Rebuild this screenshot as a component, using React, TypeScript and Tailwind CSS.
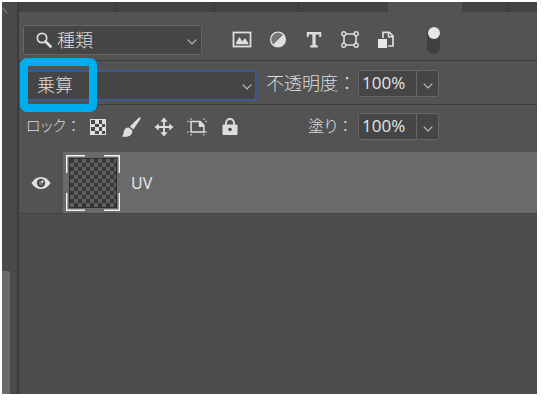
import React, { useState } from "react";

const Chevron = ({ className = "" }: { className?: string }) => (
  <svg viewBox="0 0 10 6" className={`h-[6px] w-[10px] ${className}`} fill="none" stroke="#bdbdbd" strokeWidth="1.2" aria-hidden="true">
    <path d="M0.7 0.7 5 5 9.3 0.7" />
  </svg>
);

const ImageIcon = () => (
  <svg viewBox="0 0 20 20" className="size-5" aria-hidden="true">
    <rect x="1.5" y="2.5" width="17" height="14" fill="none" stroke="#dedede" strokeWidth="1.8" />
    <path d="M4 14.2V12.8L7.4 7l3 4.6L12.8 8l3.4 4.8v1.4Z" fill="#dedede" />
  </svg>
);

const AdjustIcon = () => (
  <svg viewBox="0 0 20 20" className="size-5" aria-hidden="true">
    <path d="M15.3 4.2A7.5 7.5 0 0 1 4.7 14.8Z" fill="#dedede" />
    <path d="M15.3 4.2A7.5 7.5 0 0 0 4.7 14.8Z" fill="#777777" />
    <circle cx="10" cy="9.5" r="7.4" fill="none" stroke="#dedede" strokeWidth="1.3" />
  </svg>
);

const TypeIcon = () => (
  <svg viewBox="0 0 20 20" className="size-5" fill="#dedede" aria-hidden="true">
    <path d="M2.8 2h14.4v5h-2V4.6h-3.6v10.6h2.2v2.2H6.2v-2.2h2.2V4.6H4.8V7h-2Z" />
  </svg>
);

const ShapeIcon = () => (
  <svg viewBox="0 0 20 20" className="size-5" fill="none" stroke="#dedede" aria-hidden="true">
    <path d="M4 5.5v8M16 5.5v8M5.5 4h9M5.5 15h9" strokeWidth="1.6" />
    <g strokeWidth="1.4" fill="#535353">
      <circle cx="3.8" cy="3.8" r="2" />
      <circle cx="16.2" cy="3.8" r="2" />
      <circle cx="3.8" cy="15.2" r="2" />
      <circle cx="16.2" cy="15.2" r="2" />
    </g>
  </svg>
);

const SmartIcon = () => (
  <svg viewBox="0 0 20 20" className="size-5" aria-hidden="true">
    <path d="M7 8V2.3h6.5L17 6v10h-5" fill="none" stroke="#dedede" strokeWidth="1.7" />
    <path d="M12.5 2v4.8H17" fill="none" stroke="#dedede" strokeWidth="1.5" />
    <rect x="2" y="9" width="9" height="9" fill="#e6e6e6" />
  </svg>
);

const CheckerIcon = () => (
  <svg viewBox="0 0 20 20" className="size-5" aria-hidden="true">
    <rect x="2" y="2" width="16" height="16" fill="#dedede" />
    <path d="M3 3h4v4H3zM11 3h3v4h-3zM7 7h4v3H7zM14 7h3v3h-3zM3 10h4v4H3zM11 10h3v4h-3zM7 14h4v3H7zM14 14h3v3h-3z" fill="#484848" />
  </svg>
);

const BrushIcon = () => (
  <svg viewBox="0 0 20 20" className="size-5" fill="#dedede" aria-hidden="true">
    <path d="M19.2 .5c.6.4.5 1 .1 1.7l-7 10.3-3.5-3L17.500 1c.6-.6 1.200-.9 1.700-.5Z" />
    <path d="M8 10.700l3.300 2.900c.4 4.800-4.600 7.200-10.600 5.800 2.200-1.300 1.400-3.400 2.400-5.800.9-2.200 2.800-3.300 4.900-2.900Z" />
  </svg>
);

const MoveIcon = () => (
  <svg viewBox="0 0 20 20" className="size-5" fill="#dedede" aria-hidden="true">
    <path d="M9.100 4h1.800v5.100H16v1.800h-5.100V16H9.100v-5.100H4V9.100h5.100Z" />
    <path d="M10 .5 13.600 4.800H6.400ZM10 19.500l3.600-4.300H6.400ZM.5 10l4.300-3.600v7.200ZM19.500 10l-4.300-3.600v7.200Z" />
  </svg>
);

const ArtboardIcon = () => (
  <svg viewBox="0 0 22 20" className="h-5 w-5 overflow-visible" aria-hidden="true">
    <path d="M4.500 3v13M3 4h11.500l4 4v8M3.500 15.500H20" fill="none" stroke="#dedede" strokeWidth="1.600" />
    <path d="M13 4h1.800L18.800 8v2H13Z" fill="#dedede" />
    <path d="M3.700 .5h1.600v1.600H3.700zM17.700 .5h1.600v1.600h-1.600zM.2 3.200h1.600v1.600H.2zM20.200 3.200h1.600v1.600h-1.600zM.2 14.700h1.600v1.600H.2zM20.200 14.700h1.600v1.600h-1.600zM3.700 17.700h1.600v1.600H3.700zM17.700 17.700h1.600v1.600h-1.600z" fill="#c4c4c4" />
  </svg>
);

const LockIcon = () => (
  <svg viewBox="0 0 20 20" className="size-5" aria-hidden="true">
    <path d="M6 9V6a4 4 0 0 1 8 0v3" fill="none" stroke="#dedede" strokeWidth="1.900" />
    <rect x="2.500" y="7.500" width="15" height="10.500" rx="1" fill="#dedede" />
    <circle cx="10" cy="12.500" r="1.800" fill="#4a4a4a" />
  </svg>
);

const EyeIcon = () => (
  <svg viewBox="0 0 20 14" className="h-[14px] w-5" aria-hidden="true">
    <path d="M.5 7C3 3 6.200 1 10 1s7 2 9.500 6C17 11 13.800 13 10 13S3 11 .5 7Z" fill="#e2e2e2" />
    <circle cx="10" cy="7" r="4.200" fill="#484848" />
    <circle cx="10" cy="7" r="2.300" fill="#777777" />
    <circle cx="11.400" cy="5.600" r="1.200" fill="#e2e2e2" />
  </svg>
);

const Thumbnail = () => (
  <svg viewBox="0 0 54 56" className="h-14 w-[54px]" aria-hidden="true">
    <defs>
      <pattern id="checker" width="8" height="8" x="4" y="4" patternUnits="userSpaceOnUse">
        <rect width="8" height="8" fill="#606060" />
        <path d="M0 0h4v4H0zM4 4h4v4H4z" fill="#363636" />
      </pattern>
    </defs>
    <rect x="3.500" y="3.500" width="47" height="49" fill="url(#checker)" stroke="#2d2d2d" />
    <path d="M.7 18V.7H19M38 .7h15.300V18M53.300 38v17.300H38M19 55.300H.7V38" fill="none" stroke="#f2f2f2" strokeWidth="1.400" />
  </svg>
);

const IconButton = ({ label, children }: { label: string; children: React.ReactNode }) => (
  <button type="button" aria-label={label} className="flex h-5 shrink-0 items-center justify-center">
    {children}
  </button>
);

const PercentField = ({ id, menuLabel }: { id: string; menuLabel: string }) => (
  <div className="flex h-[27px] w-[81px] shrink-0 rounded-[3px] border border-[#666666] bg-[#454545]">
    <input
      id={id}
      defaultValue="100%"
      className="w-[57px] min-w-0 bg-transparent pb-[2px] pl-[3px] font-['Open_Sans',sans-serif] text-[17px] leading-6 font-normal text-[#e4e4e4] outline-none"
    />
    <button type="button" aria-label={menuLabel} className="flex flex-1 items-center justify-center border-l border-[#666666] pt-1">
      <Chevron />
    </button>
  </div>
);

export default function App() {
  const [filterOn, setFilterOn] = useState(true);

  return (
    <div className="h-screen bg-white pt-[2px] pr-[7px] pb-[6px] pl-[2px] font-['Noto_Sans_CJK_JP',sans-serif] text-[18px] leading-6 font-light text-[#dcdcdc]">
      <div className="flex h-full overflow-hidden bg-[#4d4d4d]">
        <aside className="flex w-[17px] shrink-0 flex-col border-r-2 border-[#3b3b3b] bg-[#4a4a4a]">
          <svg viewBox="0 0 6 10" className="mt-[3px] h-[10px] w-[6px]" fill="none" stroke="#999999" aria-hidden="true">
            <path d="M0 2.500 5 8" />
          </svg>
          <div className="mt-auto h-[123px] w-2 rounded-tr-[2px] bg-[#6a6a6a]" />
        </aside>

        <main className="flex min-w-0 flex-1 flex-col">
          <div className="flex h-[10px] shrink-0 bg-[#434343]">
            <div className="w-[97px] border-r border-[#373737]" />
            <div className="w-[99px] border-r border-[#373737]" />
            <div className="w-[84px] border-r border-[#373737]" />
            <div className="w-[89px]" />
            <div className="w-[74px] bg-[#535353]" />
            <div className="w-[47px] border-r border-[#373737]" />
          </div>

          <div className="flex h-[49px] shrink-0 items-center border-b border-[#3d3d3d] bg-[#535353] pt-2 pl-1">
            <div className="relative w-[179px] shrink-0">
              <svg viewBox="0 0 16 16" className="pointer-events-none absolute top-[7px] left-[13px] size-4" fill="none" stroke="#dedede" aria-hidden="true">
                <circle cx="6" cy="6" r="4.700" strokeWidth="1.700" />
                <path d="m9.500 9.500 5 5" strokeWidth="2.600" strokeLinecap="round" />
              </svg>
              <select aria-label="フィルター" className="block h-[30px] w-full appearance-none rounded-[3px] border border-[#666666] bg-[#454545] pb-[2px] pl-[33px] outline-none">
                <option>種類</option>
              </select>
              <Chevron className="pointer-events-none absolute top-[14px] right-[5px]" />
            </div>
            <div className="ml-[30px] flex gap-4">
              <IconButton label="ピクセルレイヤー"><ImageIcon /></IconButton>
              <IconButton label="調整レイヤー"><AdjustIcon /></IconButton>
              <IconButton label="テキストレイヤー"><TypeIcon /></IconButton>
              <IconButton label="シェイプレイヤー"><ShapeIcon /></IconButton>
              <IconButton label="スマートオブジェクト"><SmartIcon /></IconButton>
            </div>
            <button
              type="button"
              role="switch"
              aria-checked={filterOn}
              aria-label="フィルターの切り替え"
              onClick={() => setFilterOn(!filterOn)}
              className={`ml-[31px] flex h-[27px] w-[13px] shrink-0 justify-center rounded-full bg-[#404040] ${filterOn ? "items-start" : "items-end"}`}
            >
              <span className="size-3 shrink-0 rounded-full bg-[#e6e6e6]" />
            </button>
          </div>

          <div className="flex h-11 shrink-0 items-start border-b border-[#3d3d3d] bg-[#535353] pt-[9px] pl-[6px]">
            <div className="relative w-[232px] shrink-0">
              <select aria-label="描画モード" className="block h-[31px] w-full appearance-none rounded-[2px] border-2 border-[#3c5a8c] bg-[#454545] pb-1 pl-[10px] outline-none">
                <option>乗算</option>
              </select>
              <Chevron className="pointer-events-none absolute top-[14px] right-[5px]" />
              <div className="pointer-events-none absolute -top-3 -left-[5px] h-[54px] w-[77px] rounded-[7px] border-8 border-[#00adef]" />
            </div>
            <label htmlFor="opacity" className="ml-[9px] w-[92px] shrink-0 whitespace-nowrap">不透明度：</label>
            <PercentField id="opacity" menuLabel="不透明度の調整" />
          </div>

          <div className="flex h-[47px] shrink-0 items-start bg-[#535353] pt-2 pl-[7px]">
            <span className="w-[62px] shrink-0 text-[15px] whitespace-nowrap">
              <span className="[font-feature-settings:'palt']">ロック</span>：
            </span>
            <div className="mt-1 flex gap-[13px]">
              <IconButton label="透明ピクセルをロック"><CheckerIcon /></IconButton>
              <IconButton label="画像ピクセルをロック"><BrushIcon /></IconButton>
              <IconButton label="位置をロック"><MoveIcon /></IconButton>
              <IconButton label="アートボードをロック"><ArtboardIcon /></IconButton>
              <IconButton label="すべてをロック"><LockIcon /></IconButton>
            </div>
            <label htmlFor="fill" className="ml-[68px] w-[50px] shrink-0 text-[16px] whitespace-nowrap">
              <span className="[font-feature-settings:'palt']">塗り</span>：
            </label>
            <PercentField id="fill" menuLabel="塗りの調整" />
          </div>

          <div className="flex h-[62px] shrink-0 border-b border-[#444444] bg-[#6a6a6a]">
            <button type="button" aria-label="レイヤーの表示" className="flex w-11 shrink-0 items-center justify-center bg-[#535353]">
              <EyeIcon />
            </button>
            <div className="flex flex-1 items-center gap-[11px] pl-[3px]">
              <Thumbnail />
              <span className="font-['Noto_Sans',sans-serif] text-[16px] font-normal text-[#e4e4e4]">UV</span>
            </div>
          </div>
        </main>
      </div>
    </div>
  );
}
